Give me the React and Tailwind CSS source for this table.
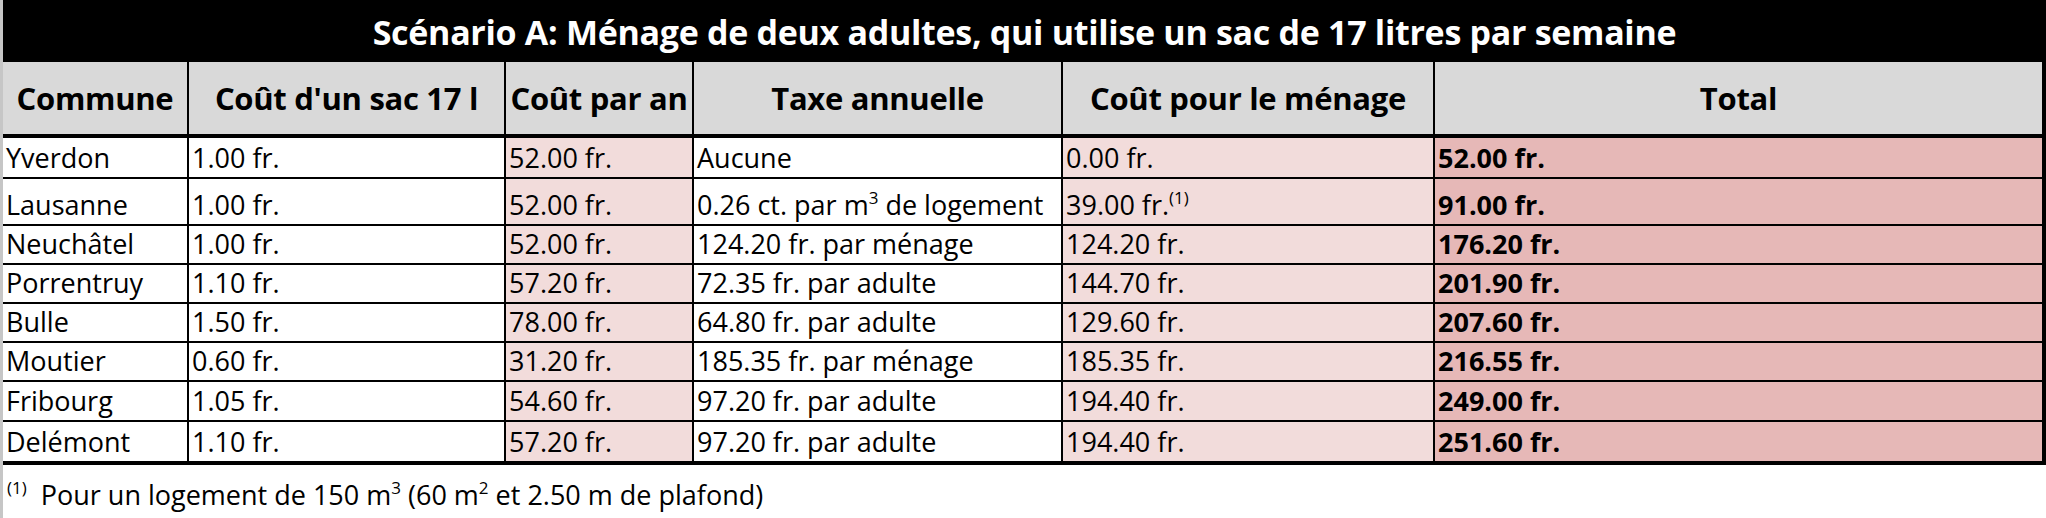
import React from "react";

const sup = "text-[17px] align-[11px] leading-none";

const rows = [
  { h: "h-[41px]", b: "border-b-2", c: ["Yverdon", "1.00 fr.", "52.00 fr.", "Aucune", "0.00 fr.", "52.00 fr."] },
  {
    h: "h-[47px]",
    b: "border-b-2",
    c: [
      "Lausanne",
      "1.00 fr.",
      "52.00 fr.",
      <>0.26 ct. par m<span className={sup}>3</span> de logement</>,
      <>39.00 fr.<span className={sup}>(1)</span></>,
      "91.00 fr.",
    ],
  },
  { h: "h-[39px]", b: "border-b-2", c: ["Neuchâtel", "1.00 fr.", "52.00 fr.", "124.20 fr. par ménage", "124.20 fr.", "176.20 fr."] },
  { h: "h-[39px]", b: "border-b-2", c: ["Porrentruy", "1.10 fr.", "57.20 fr.", "72.35 fr. par adulte", "144.70 fr.", "201.90 fr."] },
  { h: "h-[39px]", b: "border-b-2", c: ["Bulle", "1.50 fr.", "78.00 fr.", "64.80 fr. par adulte", "129.60 fr.", "207.60 fr."] },
  { h: "h-[39px]", b: "border-b-2", c: ["Moutier", "0.60 fr.", "31.20 fr.", "185.35 fr. par ménage", "185.35 fr.", "216.55 fr."] },
  { h: "h-[40px]", b: "border-b-2", c: ["Fribourg", "1.05 fr.", "54.60 fr.", "97.20 fr. par adulte", "194.40 fr.", "249.00 fr."] },
  { h: "h-[43px]", b: "border-b-4", c: ["Delémont", "1.10 fr.", "57.20 fr.", "97.20 fr. par adulte", "194.40 fr.", "251.60 fr."] },
];

const colCls = [
  "w-[186px] bg-white border-r-2",
  "w-[317px] bg-white border-r-2",
  "w-[188px] bg-[#f2dcdb] border-r-2",
  "w-[369px] bg-white border-r-2",
  "w-[372px] bg-[#f2dcdb] border-r-2",
  "flex-1 bg-[#e6b8b7] border-r-4 font-bold",
];

const headers = ["Commune", "Coût d'un sac 17 l", "Coût par an", "Taxe annuelle", "Coût pour le ménage", "Total"];
const headW = ["w-[186px] border-r-2", "w-[317px] border-r-2", "w-[188px] border-r-2", "w-[369px] border-r-2", "w-[372px] border-r-2", "flex-1 border-r-4"];

export default function App() {
  return (
    <div className="w-[2046px] h-[518px] bg-white border-l-[3px] border-[#c6c6c6] font-['Open_Sans',sans-serif] text-black overflow-hidden">
      <div className="h-[62px] bg-black text-white font-bold text-[34px] tracking-[-0.3px] flex items-center justify-center pt-[2px] leading-none whitespace-nowrap">
        Scénario A: Ménage de deux adultes, qui utilise un sac de 17 litres par semaine
      </div>
      <div className="flex h-[76px] bg-[#d9d9d9] border-b-4 border-black">
        {headers.map((t, i) => (
          <div key={i} className={`${headW[i]} border-black flex items-center justify-center font-bold text-[31px] tracking-[-0.3px] leading-none whitespace-nowrap`}>
            {t}
          </div>
        ))}
      </div>
      {rows.map((r, ri) => (
        <div key={ri} className={`flex ${r.h} ${r.b} border-black`}>
          {r.c.map((t, ci) => (
            <div key={ci} className={`${colCls[ci]} border-black flex items-end pl-[3px] pb-[6px] text-[27px] leading-none whitespace-nowrap`}>
              <span>{t}</span>
            </div>
          ))}
        </div>
      ))}
      <div className="pl-[4px] pt-[14px] text-[27px] leading-none whitespace-nowrap">
        <span className={`${sup} mr-[14px]`}>(1)</span>
        Pour un logement de 150 m<span className={sup}>3</span> (60 m<span className={sup}>2</span> et 2.50 m de plafond)
      </div>
    </div>
  );
}
